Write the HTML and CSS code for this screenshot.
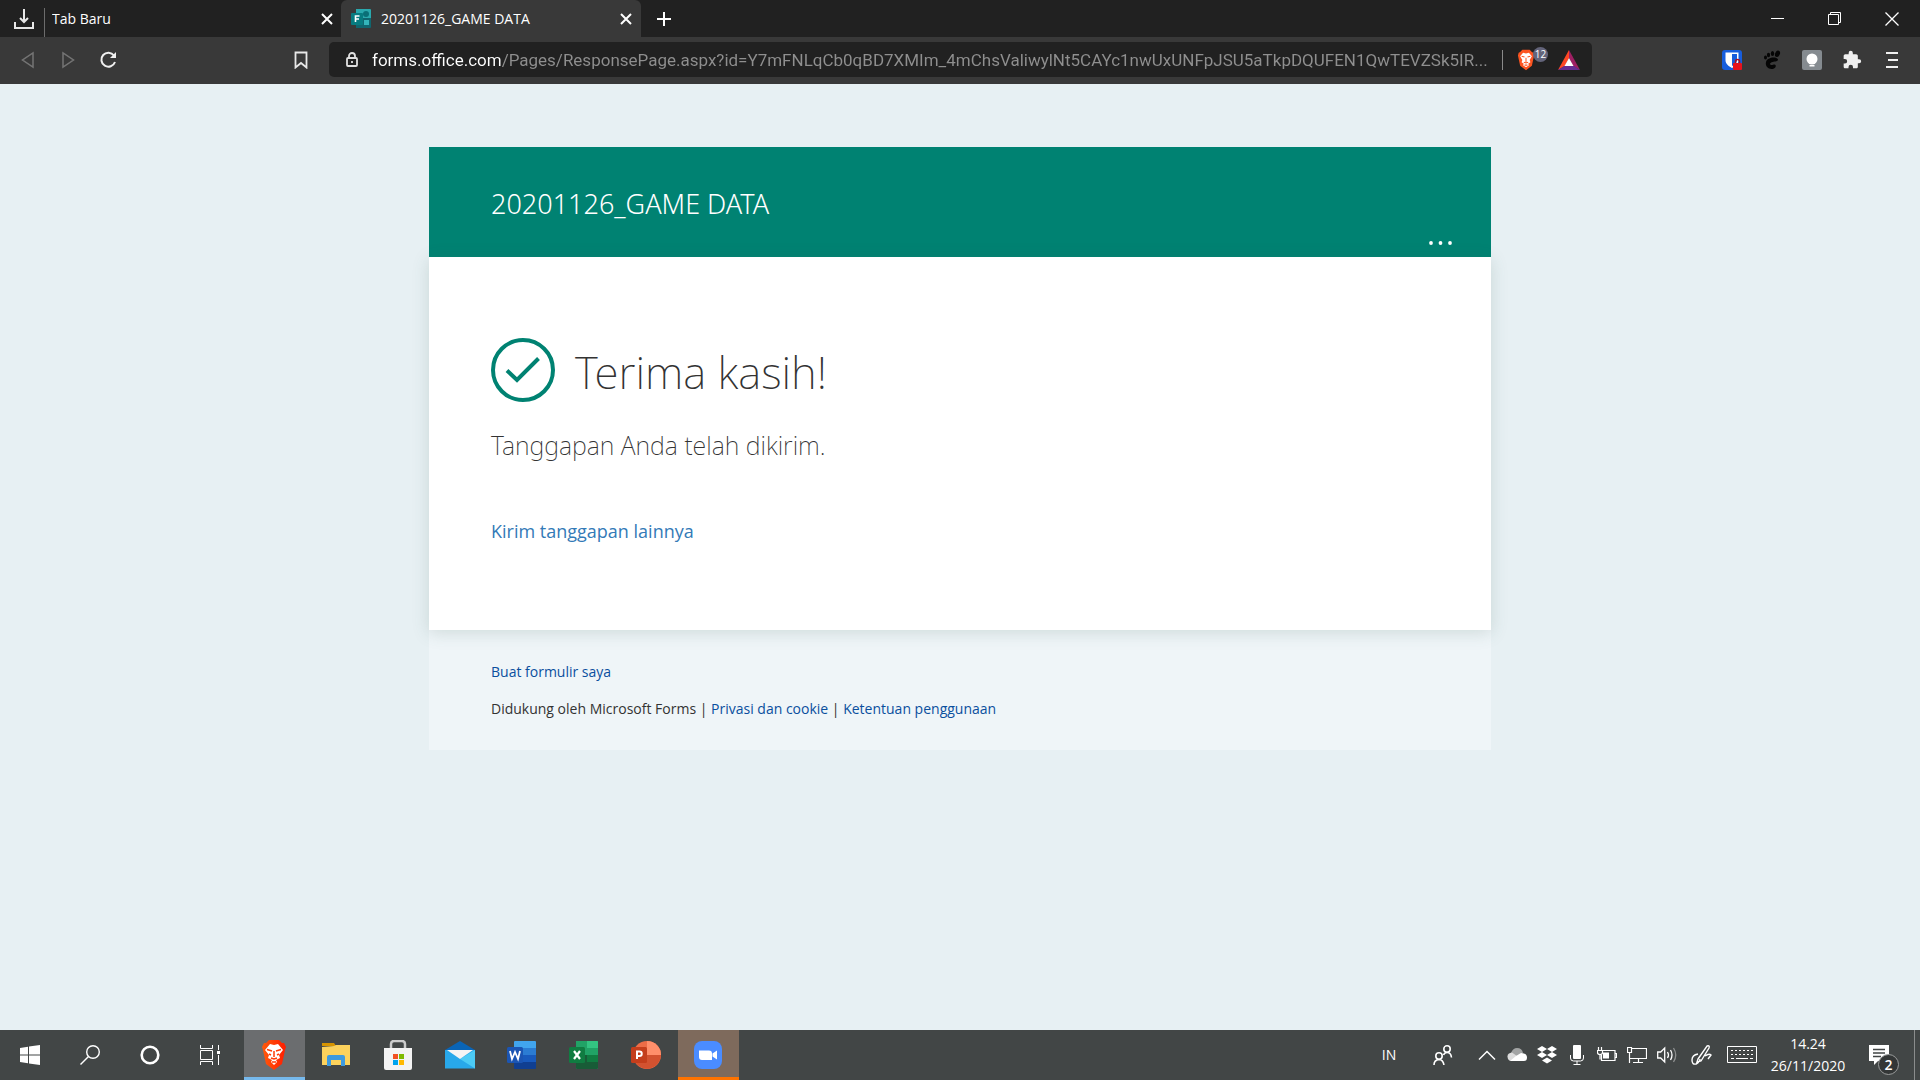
FILE: index.html
```html
<!DOCTYPE html>
<html lang="id">
<head>
<meta charset="utf-8">
<meta name="viewport" content="width=device-width, initial-scale=1">
<title>20201126_GAME DATA</title>
<link rel="stylesheet" href="styles.css">
</head>
<body>
<header class="browser">
  <div class="tabstrip">
    <button class="pinned" aria-label="Unduhan"><svg width="22" height="22" viewBox="0 0 22 22" fill="none" stroke="#e8e8e8" stroke-width="2"><path d="M11 1v13M7 10l4 4 4-4M2 14v6h18v-6"/></svg></button>
    <div class="tab tab-idle">
      <span class="tab-title">Tab Baru</span>
      <button class="tab-close" aria-label="Tutup tab"><svg width="12" height="12" viewBox="0 0 12 12" stroke="#fff" stroke-width="2"><path d="M1 1l10 10M11 1L1 11"/></svg></button>
    </div>
    <div class="tab tab-active">
      <svg class="favicon" width="20" height="20" viewBox="0 0 20 20"><path d="M5 0h14a1 1 0 0 1 1 1v8H5z" fill="#2aa9ae"/><path d="M5 9h15v9a1 1 0 0 1-1 1H5z" fill="#10666f"/><circle cx="15" cy="5" r="3" fill="#0a6f77"/><rect x="13" y="11" width="5" height="5" fill="#34b5ba"/><rect x="0" y="4" width="12" height="12" rx="1" fill="#077b80"/><path d="M4.500 13V7h4M4.500 10h3.500" stroke="#fff" stroke-width="1.600" fill="none"/></svg>
      <span class="tab-title">20201126_GAME DATA</span>
      <button class="tab-close" aria-label="Tutup tab"><svg width="12" height="12" viewBox="0 0 12 12" stroke="#fff" stroke-width="2"><path d="M1 1l10 10M11 1L1 11"/></svg></button>
    </div>
    <button class="new-tab" aria-label="Tab baru"><svg width="14" height="14" viewBox="0 0 14 14" stroke="#fff" stroke-width="2"><path d="M7 0v14M0 7h14"/></svg></button>
    <div class="window-controls">
      <button aria-label="Kecilkan"><svg width="14" height="14" viewBox="0 0 14 14" stroke="#fff"><path d="M0 6.500h13"/></svg></button>
      <button aria-label="Pulihkan"><svg width="14" height="14" viewBox="0 0 14 14" fill="none" stroke="#fff"><path d="M.5 2.500h10v10H.5zM2.500 2.500v-2h10v10h-2"/></svg></button>
      <button aria-label="Tutup"><svg width="14" height="14" viewBox="0 0 14 14" stroke="#fff" stroke-width="1.300"><path d="M.5.5l13 13M13.500.5l-13 13"/></svg></button>
    </div>
  </div>
  <div class="toolbar">
    <nav class="nav-buttons">
      <button aria-label="Kembali"><svg width="14" height="18" viewBox="0 0 14 18" fill="none" stroke="#747474" stroke-width="1.500"><path d="M12 2v14L1.500 9z"/></svg></button>
      <button aria-label="Maju"><svg width="14" height="18" viewBox="0 0 14 18" fill="none" stroke="#747474" stroke-width="1.500"><path d="M2 2v14L12.500 9z"/></svg></button>
      <button aria-label="Muat ulang"><svg width="18" height="18" viewBox="0 0 18 18" fill="none" stroke="#f0f0f0" stroke-width="2"><path d="M15 4.500A7 7 0 1 0 16 11"/><path d="M17 1v6h-6z" fill="#f0f0f0" stroke="none"/></svg></button>
    </nav>
    <button class="bookmark" aria-label="Markah"><svg width="14" height="18" viewBox="0 0 14 18" fill="none" stroke="#e8e8e8" stroke-width="1.800"><path d="M1.500 1.500h11v15L7 12l-5.500 4.500z"/></svg></button>
    <div class="address">
      <svg class="lock" width="12" height="16" viewBox="0 0 12 16" fill="none" stroke="#e0e0e0" stroke-width="1.800"><rect x="1" y="6" width="10" height="8" rx="1"/><path d="M3 6V4a3 3 0 0 1 6 0v2M6 9v2"/></svg>
      <input class="url" type="text" aria-label="Alamat situs" value="forms.office.com/Pages/ResponsePage.aspx?id=Y7mFNLqCb0qBD7XMIm_4mChsValiwylNt5CAYc1nwUxUNFpJSU5aTkpDQUFEN1QwTEVZSk5IR...">
      <button class="shield" aria-label="Brave Shields">
        <svg width="18" height="22" viewBox="0 0 24 30"><path d="M7 1h10l3 3 2 1 1 4-3 14-8 6-8-6L1 9l1-4 2-1z" fill="#fb5420"/><path d="M12 6l4-1 4 5-3 5 1 3-3 2 1 2-4 3-4-3 1-2-3-2 1-3-3-5 4-5z" fill="#fff"/><path d="M6 10l4 1M18 10l-4 1M12 12v6M9 18l3 1 3-1M10 22h4" stroke="#fb5420" stroke-width="1.400" fill="none"/></svg>
        <span class="shield-count">12</span>
      </button>
      <button class="rewards" aria-label="Brave Rewards"><svg width="22" height="20" viewBox="0 0 22 20"><path d="M11 0L0 20l7-4 4-8z" fill="#ff4724"/><path d="M11 0l11 20-7-4-4-8z" fill="#9e1f63"/><path d="M0 20h22l-6-4H6z" fill="#662d91"/><path d="M11 8l4.500 8h-9z" fill="#fff"/></svg></button>
    </div>
    <div class="extensions">
      <button aria-label="Bitwarden"><svg width="22" height="22" viewBox="0 0 22 22"><rect x="1" y="1" width="20" height="20" rx="3" fill="#175ddc"/><path d="M4.500 3.500h13V11c0 4-3 6-6.500 8-3.500-2-6.500-4-6.500-8z" fill="#fff"/><path d="M11 5h5v6c0 3-2 4.500-5 6z" fill="#175ddc"/><path d="M14.500 14v-1.500a2 2 0 0 1 4 0V14" fill="none" stroke="#aa1020" stroke-width="1.500"/><rect x="12" y="14" width="9" height="7" rx="1" fill="#e8121c"/></svg></button>
      <button aria-label="GNOME Shell"><svg width="18" height="20" viewBox="0 0 18 20" fill="#050505"><ellipse cx="2.500" cy="7.500" rx="1.500" ry="2"/><ellipse cx="5.500" cy="5" rx="1.600" ry="2.300"/><ellipse cx="9.500" cy="3.600" rx="1.700" ry="2.500"/><ellipse cx="14.500" cy="3.800" rx="2.300" ry="3.300" transform="rotate(25 14.500 3.800)"/><path d="M15 9.500C13 6 4 7.500 3 12c-1 4 2 7 5.500 7 3 0 5-2 4-4-1-1.500-3 .5-4.500 0-2-1-.5-2.500 1.500-3 2.500-.5 6-1 5.500-2.500z"/></svg></button>
      <button aria-label="Lampu"><svg width="22" height="22" viewBox="0 0 22 22"><rect x="1" y="1" width="20" height="20" rx="2" fill="#858b90"/><circle cx="11" cy="10" r="5.500" fill="#fff"/><path d="M8 12h6v3H8zM8.500 16h5v1.500h-5z" fill="#fff"/></svg></button>
      <button aria-label="Ekstensi"><svg width="20" height="20" viewBox="0 0 24 24" fill="#f0f0f0"><path d="M20.500 11H19V7c0-1.100-.9-2-2-2h-4V3.500a2.500 2.500 0 0 0-5 0V5H4c-1.100 0-2 .9-2 2v3.800h1.500a2.700 2.700 0 0 1 0 5.400H2V20c0 1.100.9 2 2 2h3.800v-1.500a2.700 2.700 0 0 1 5.400 0V22H17c1.100 0 2-.9 2-2v-4h1.500a2.500 2.500 0 0 0 0-5z"/></svg></button>
      <button aria-label="Menu"><svg width="12" height="18" viewBox="0 0 12 18" stroke="#f0f0f0" stroke-width="2"><path d="M0 2h12M2 9h10M0 16h12"/></svg></button>
    </div>
  </div>
</header>

<main class="page">
  <article class="form">
    <header class="form-header">
      <h1>20201126_GAME DATA</h1>
      <button class="more" aria-label="Opsi lainnya"><svg width="24" height="4" viewBox="0 0 24 4" fill="#fff"><circle cx="2" cy="2" r="1.900"/><circle cx="11.500" cy="2" r="1.900"/><circle cx="21" cy="2" r="1.900"/></svg></button>
    </header>
    <section class="form-body">
      <div class="thanks">
        <svg width="64" height="64" viewBox="0 0 64 64" fill="none" stroke="#008272"><circle cx="32" cy="32" r="30" stroke-width="4"/><path d="M16 32.500l10 9.500 21.500-21.500" stroke-width="4"/></svg>
        <h2>Terima kasih!</h2>
      </div>
      <p class="sent">Tanggapan Anda telah dikirim.</p>
      <a class="again" href="#">Kirim tanggapan lainnya</a>
    </section>
    <footer class="form-footer">
      <p><a href="#">Buat formulir saya</a></p>
      <p>Didukung oleh Microsoft Forms | <a href="#">Privasi dan cookie</a> | <a href="#">Ketentuan penggunaan</a></p>
    </footer>
  </article>
</main>

<footer class="taskbar">
  <div class="system-apps">
    <button aria-label="Mulai"><svg width="20" height="20" viewBox="0 0 20 20" fill="#fff"><path d="M0 3l8-1.200v7.700H0zM9 1.600L20 0v9.500H9zM0 10.500h8v7.700L0 17zM9 10.500h11V20L9 18.400z"/></svg></button>
    <button aria-label="Cari"><svg width="20" height="20" viewBox="0 0 20 20" fill="none" stroke="#fff" stroke-width="1.400"><circle cx="13" cy="7" r="6.300"/><path d="M8.500 11.500L.5 19.500"/></svg></button>
    <button aria-label="Cortana"><svg width="20" height="20" viewBox="0 0 20 20" fill="none" stroke="#fff" stroke-width="2.600"><circle cx="10" cy="10" r="8.300"/></svg></button>
    <button aria-label="Tampilan tugas"><svg width="20" height="20" viewBox="0 0 20 20" fill="none" stroke="#fff"><path d="M.5 0v3.500h12V0M.5 5.500h12v9H.5zM.5 20v-3.500h12V20M18.500 0v5M18.500 10v10"/><path d="M17 6h3v3h-3z" fill="#fff" stroke="none"/></svg></button>
  </div>
  <div class="apps">
    <button class="app-active" aria-label="Brave"><svg width="26" height="30" viewBox="0 0 26 30"><defs><linearGradient id="bv"><stop offset="0" stop-color="#ff5a0a"/><stop offset="1" stop-color="#ff1c00"/></linearGradient></defs><path d="M8 0h10l3 3h2l2 4-1 3-3 14-8 6-8-6L2 10 1 7l2-4h2z" fill="url(#bv)"/><path d="M13 5l4-1 5 6-4 5 1 3-4 2 1 2-3 3-3-3 1-2-4-2 1-3-4-5 5-6z" fill="#fff"/><path d="M6 9.500l5 1.500M20 9.500L15 11M13 11v6M10 18l3 1 3-1M11 22h4M8 14l2 1M18 14l-2 1" stroke="#ff3c08" stroke-width="1.500" fill="none"/></svg></button>
    <button aria-label="File Explorer"><svg width="28" height="24" viewBox="0 0 28 24"><path d="M0 0h12l2 3H0z" fill="#d79400"/><path d="M0 4l12-1 2-1h14v20H0z" fill="#fcd25c"/><path d="M5 14q0-2 2-2h14q2 0 2 2v9h-4v-6H9v6H5z" fill="#3e9ade"/></svg></button>
    <button aria-label="Microsoft Store"><svg width="30" height="30" viewBox="0 0 30 30"><path d="M8 9V4q0-3 3-3h8q3 0 3 3v5" fill="none" stroke="#ccc" stroke-width="2.500"/><path d="M1 8h28v20q0 2-2 2H3q-2 0-2-2z" fill="#f3f3f3"/><path d="M10 14h5v5h-5z" fill="#f25022"/><path d="M16 14h5v5h-5z" fill="#7fba00"/><path d="M10 20h5v5h-5z" fill="#00a4ef"/><path d="M16 20h5v5h-5z" fill="#ffb900"/></svg></button>
    <button aria-label="Mail"><svg width="30" height="28" viewBox="0 0 30 28"><path d="M0 9L15 0l15 9v3H0z" fill="#0a64b5"/><path d="M0 9h30v18.500H0z" fill="#28a8ea"/><path d="M30 9L15 18l15 9.500z" fill="#4ccbf5"/><path d="M2 9h26l-13 9z" fill="#f4f4f4"/></svg></button>
    <button aria-label="Word"><svg width="30" height="28" viewBox="0 0 30 28"><path d="M7 7V1q0-1 1-1h20q1 0 1 1v6z" fill="#41a5ee"/><path d="M7 7h22v7H7z" fill="#2b7cd3"/><path d="M7 14h22v7H7z" fill="#185abd"/><path d="M7 21h22v6q0 1-1 1H8q-1 0-1-1z" fill="#103f91"/><rect y="6" width="16" height="16" rx="1.500" fill="#1b55b3"/><path d="M3 10l2 8 3-7 3 7 2-8" fill="none" stroke="#fff" stroke-width="1.800"/></svg></button>
    <button aria-label="Excel"><svg width="30" height="28" viewBox="0 0 30 28"><path d="M7 0h22v28H8q-1 0-1-1z" fill="#21a366"/><path d="M18 0h10q1 0 1 1v6H18z" fill="#33c481"/><path d="M7 14h11v7H7z" fill="#185c37"/><path d="M18 14h11v7H18z" fill="#107c41"/><path d="M7 21h22v6q0 1-1 1H8q-1 0-1-1z" fill="#185c37"/><rect y="6" width="16" height="16" rx="1.500" fill="#107c41"/><path d="M5 10l6 8M11 10l-6 8" fill="none" stroke="#fff" stroke-width="2.200"/></svg></button>
    <button aria-label="PowerPoint"><svg width="30" height="28" viewBox="0 0 30 28"><circle cx="16" cy="14" r="14" fill="#ed6c47"/><path d="M16 0a14 14 0 0 1 14 14H16z" fill="#ff8f6b"/><path d="M30 14a14 14 0 0 1-27 5l13-5z" fill="#d35230"/><rect y="6" width="16" height="16" rx="1.500" fill="#c43e1c"/><path d="M6 18v-7.500h2.500a2.200 2.200 0 0 1 0 4.500H6" fill="none" stroke="#fff" stroke-width="2"/></svg></button>
    <button class="app-alert" aria-label="Zoom"><svg width="28" height="28" viewBox="0 0 28 28"><rect width="28" height="28" rx="8" fill="#4a8cff"/><path d="M5 9.500h10q3 0 3 3V19H8q-3 0-3-3zM18.500 12.500L23 9.500v9l-4.500-3z" fill="#fff"/></svg></button>
  </div>
  <div class="tray">
    <button class="lang">IN</button>
    <button class="people" aria-label="Orang"><svg width="20" height="20" viewBox="0 0 20 20" fill="none" stroke="#fff" stroke-width="1.600"><circle cx="14" cy="4" r="3.200"/><circle cx="6" cy="11" r="3.200"/><path d="M1 20q0-5 5-5.500 4 0 5 5.500M10.500 10q1-2.500 3.500-2.500 4 0 4.500 5"/></svg></button>
    <button class="tray-icon" aria-label="Ikon tersembunyi"><svg width="18" height="12" viewBox="0 0 18 12" fill="none" stroke="#fff" stroke-width="1.500"><path d="M1 10.500l8-8 8 8"/></svg></button>
    <button class="tray-icon" aria-label="OneDrive"><svg width="20" height="14" viewBox="0 0 20 14"><path d="M4 5q2-5 6-5 5 0 6 5l-6 4z" fill="#a2a4a4"/><path d="M1 11Q-1 5 5 4.500L17 13H4q-2 0-3-2z" fill="#dcdcdc"/><path d="M9 8l5-3q6 0 6 4.500 0 3.500-3 3.500H3z" fill="#fff"/></svg></button>
    <button class="tray-icon" aria-label="Dropbox"><svg width="20" height="18" viewBox="0 0 20 18" fill="#fff"><path d="M5 0l5 3-5 3-5-3zM15 0l5 3-5 3-5-3zM5 6l5 3-5 3-5-3zM15 6l5 3-5 3-5-3zM10 11.500l5 3-5 3-5-3z"/></svg></button>
    <button class="tray-icon" aria-label="Mikrofon"><svg width="14" height="20" viewBox="0 0 14 20" fill="none" stroke="#fff"><rect x="3" y="0" width="8" height="14" rx="1" fill="#fff" stroke="none"/><path d="M.5 10v3q0 3 3 3h7q3 0 3-3v-3M7 16v3M3.500 19.500h7"/></svg></button>
    <button class="tray-icon" aria-label="Baterai"><svg width="20" height="16" viewBox="0 0 20 16" fill="none" stroke="#fff" stroke-width="1.200"><path d="M6 3.500h12v10H4.500V8M18.500 6.500h1v4h-1M1.500 0v3M4.500 0v3M.5 3.500h5v2q0 2-2.500 2t-2.500-2zM3 7.500v5"/><path d="M6 5.500h6v6H6z" fill="#fff" stroke="none"/></svg></button>
    <button class="tray-icon" aria-label="Jaringan"><svg width="20" height="18" viewBox="0 0 20 18" fill="none" stroke="#fff" stroke-width="1.200"><path d="M5 2.500h14.500v10H3M.5 1.500h4v5h-4zM2.500 6.500V17M11.500 12.500v4M6 16.500h10"/></svg></button>
    <button class="tray-icon" aria-label="Suara"><svg width="20" height="18" viewBox="0 0 20 18" fill="none" stroke="#fff" stroke-width="1.300"><path d="M.7 6h3l4-4v14l-4-4h-3zM10.500 6q2 3 0 6M13.500 4q3 5 0 10"/><path d="M16.500 2q4.500 7 0 14" stroke="#8d8f8f"/></svg></button>
    <button class="tray-wide" aria-label="Tinta"><svg width="22" height="22" viewBox="0 0 22 22" fill="none" stroke="#fff" stroke-width="1.400"><path d="M7 15L16 2q3-1 2 2L10 17l-4 1zM7 10q-6 1-6 6 0 5 4 4 4-2 4-5M14 12q4-3 6-1l-3 4"/></svg></button>
    <button class="tray-wide" aria-label="Papan ketik"><svg width="30" height="18" viewBox="0 0 30 18" fill="none" stroke="#fff"><path d="M.5.5h29v16H.5z"/><path d="M4 4.500h23M4 8.500h23" stroke-dasharray="2 2"/><path d="M4 12.500h3M9 12.500h12M23 12.500h3"/></svg></button>
    <button class="clock"><time datetime="14:24">14.24</time><time datetime="2020-11-26">26/11/2020</time></button>
    <button class="notifications" aria-label="Pemberitahuan"><svg width="20" height="20" viewBox="0 0 20 20"><path d="M0 0h20v16H9l-4 4v-4H0z" fill="#fff"/><path d="M4 4.500h12M4 8h12M4 11.500h8" stroke="#424646" stroke-width="1.300"/></svg><span class="notification-count">2</span></button>
    <button class="show-desktop" aria-label="Tampilkan desktop"></button>
  </div>
</footer>
</body>
</html>
```
FILE: styles.css
```css
* { box-sizing: border-box; }

body {
  margin: 0;
  min-height: 100vh;
  display: flex;
  flex-direction: column;
  background: #e7f0f3;
  color: #333;
  font: 14px/20px "Open Sans", "Noto Sans", sans-serif;
}

h1, h2, p { margin: 0; }
a { color: #0a4f9e; text-decoration: none; }
svg { display: block; flex: none; }

button {
  display: flex;
  align-items: center;
  justify-content: center;
  flex: none;
  margin: 0;
  padding: 0;
  border: 0;
  background: none;
  color: #fff;
  font: inherit;
}

/* Browser window */
.browser { background: #393939; color: #fff; }

.tabstrip {
  display: flex;
  height: 37px;
  background: #212121;
}

.pinned { width: 44px; padding-left: 4px; }

.tab {
  display: flex;
  align-items: center;
  flex: 0 1 300px;
  padding: 0 9px 0 10px;
}

.tab-idle { flex-basis: 297px; padding: 0 8px; position: relative; }
.tab-idle::before {
  content: "";
  position: absolute;
  left: 0;
  top: 8px;
  bottom: 0;
  width: 1px;
  background: #6c6c6c;
}
.tab-active { background: #393939; border-radius: 6px 6px 0 0; }
.favicon { margin-right: 10px; }
.tab-title { flex: 1; white-space: nowrap; overflow: hidden; }
.tab-close { width: 12px; height: 20px; }
.new-tab { width: 46px; }

.window-controls { display: flex; margin-left: auto; }
.window-controls button { width: 57px; }

.toolbar {
  display: flex;
  align-items: center;
  height: 47px;
  padding: 0 8px 2px;
}

.nav-buttons { display: flex; }
.nav-buttons button { width: 40px; height: 36px; }
.bookmark { width: 40px; height: 36px; margin-left: 153px; }

.address {
  display: flex;
  align-items: center;
  flex: 1;
  height: 35px;
  margin: 0 120px 0 8px;
  padding: 0 12px 0 17px;
  border-radius: 5px;
  background: #212121;
}

.url {
  flex: 1;
  min-width: 0;
  height: 24px;
  margin-left: 14px;
  padding: 0;
  border: 0;
  outline: 0;
  color: #8f8f8f;
  font: 17px/24px Roboto, sans-serif;
  text-overflow: ellipsis;
  background: linear-gradient(90deg, #fff 130px, #8f8f8f 130px);
  -webkit-background-clip: text;
  background-clip: text;
  -webkit-text-fill-color: transparent;
}

.shield {
  position: relative;
  width: 46px;
  height: 20px;
  justify-content: flex-start;
  padding-left: 14px;
  border-left: 1px solid #8a8a8a;
}

.shield-count {
  position: absolute;
  left: 30px;
  top: -3px;
  width: 15px;
  height: 15px;
  border-radius: 8px;
  background: #63647a;
  font-size: 10px;
  line-height: 15px;
}

.rewards { width: 22px; margin-left: 10px; }

.extensions { display: flex; }
.extensions button { width: 40px; height: 36px; }

/* Form */
.page {
  flex: 1;
  padding: 63px 16px;
}

.form { max-width: 1062px; margin: 0 auto; }

.form-header {
  position: relative;
  padding: 37px 62px 33px;
  background: #008272;
  color: #fff;
}

.form-header h1 {
  font: 300 27px/40px "Noto Sans", sans-serif;
}

.more {
  position: absolute;
  right: 38px;
  bottom: 5px;
  height: 18px;
}

.form-body {
  position: relative;
  padding: 81px 62px 86px;
  background: #fff;
  box-shadow: 0 3px 16px rgba(60, 100, 90, .18);
}

.thanks { display: flex; align-items: center; gap: 20px; }
.thanks h2 { padding-top: 4px; font: 200 44px/60px "Noto Sans", sans-serif; }
.sent { margin-top: 25px; font: 200 25px/36px "Noto Sans", sans-serif; }
.again {
  display: block;
  margin-top: 55px;
  color: #337ab7;
  font-size: 18px;
  line-height: 26px;
}

.form-footer {
  display: grid;
  gap: 17px;
  padding: 32px 62px 31px;
  background: #eff5f8;
}

/* Taskbar */
.taskbar {
  display: flex;
  height: 50px;
  background: #424646;
}

.system-apps, .apps, .tray { display: flex; }
.system-apps { padding-right: 4px; }
.system-apps button { width: 60px; }
.apps { gap: 1px; }
.apps button { width: 61px; padding-right: 2px; }
.apps .app-active { background: #6b6d6f; box-shadow: inset 0 -3px #76b9ed; }
.apps .app-alert { background: #7e6a5c; box-shadow: inset 0 -3px #ff7300; }

.tray { margin-left: auto; }
.lang { width: 50px; }
.people { width: 58px; }
.tray-icon { width: 30px; }
.tray-wide { width: 40px; }

.clock {
  width: 92px;
  flex-direction: column;
  line-height: 22px;
}

.notifications {
  position: relative;
  width: 60px;
  padding-right: 10px;
}

.notification-count {
  position: absolute;
  left: 24px;
  top: 24px;
  width: 21px;
  height: 21px;
  border: 1px solid #9a9c9c;
  border-radius: 11px;
  background: #333636;
  font-size: 14px;
  font-weight: 600;
  line-height: 19px;
}

.show-desktop { width: 6px; border-left: 1px solid #8a8c8c; }
```
